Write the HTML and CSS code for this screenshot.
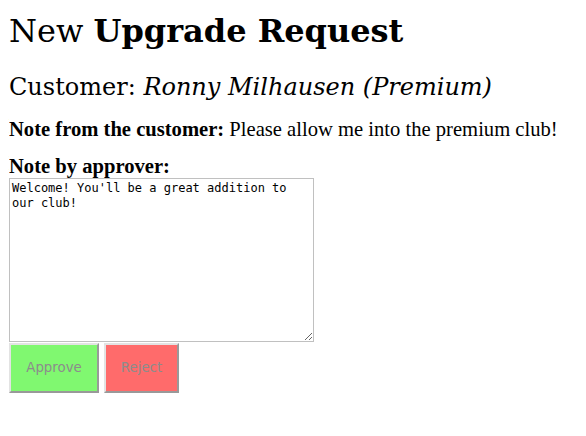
FILE: index.html
```html
<!DOCTYPE html>
<html>
<head>
<meta charset="utf-8">
<link rel="stylesheet" href="styles.css">
</head>
<body class="page">
<h1 class="title">New <strong>Upgrade Request</strong></h1>
<h2 class="customer">Customer: <em>Ronny Milhausen (Premium)</em></h2>
<p class="note"><strong>Note from the customer:</strong> Please allow me into the premium club!</p>
<form class="form">
<label class="label" for="note">Note by approver:</label>
<textarea class="textarea" id="note">Welcome! You'll be a great addition to our club!</textarea>
<div class="actions">
<button type="button" class="btn approve" disabled>Approve</button>
<button type="button" class="btn reject" disabled>Reject</button>
</div>
</form>
</body>
</html>
```

FILE: styles.css
```css
.page {
  margin: 9px;
  font-family: "Liberation Serif", serif;
  font-size: 20.6px;
  color: #000;
  background: #fff;
}
.title {
  font-family: "DejaVu Serif", serif;
  font-size: 32px;
  font-weight: normal;
  margin: 3px 0 0;
}
.title strong { font-weight: bold; }
.customer {
  font-family: "DejaVu Serif", serif;
  font-size: 24px;
  font-weight: normal;
  margin: 23px 0 0;
}
.note {
  margin: 16.5px 0 0;
  line-height: 23px;
}
.form { margin: 14px 0 0; }
.label {
  display: block;
  font-weight: bold;
  line-height: 23px;
}
.textarea {
  display: block;
  box-sizing: border-box;
  width: 305px;
  height: 164px;
  margin: 0;
  padding: 2px;
  border: 1px solid #c0c0c0;
  font-family: "DejaVu Sans Mono", monospace;
  font-size: 12px;
  line-height: 15px;
  color: #000;
  background: #fff;
}
.actions {
  display: flex;
  gap: 5px;
  margin-top: 1px;
}
.btn {
  box-sizing: border-box;
  height: 50px;
  padding: 0 14px;
  border: 2px solid;
  border-color: #e3e3e3 #999 #999 #e3e3e3;
  font-family: "DejaVu Sans", sans-serif;
  font-size: 13.33px;
  color: #8c8c8c;
}
.approve { background: #80f870; width: 90px; }
.reject { background: #ff6b6b; width: 75px; }
```
